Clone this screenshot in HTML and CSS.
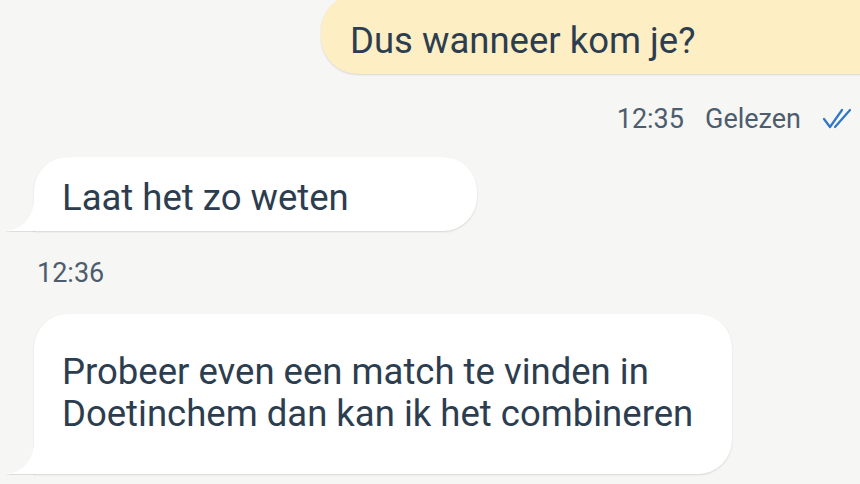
FILE: index.html
```html
<!DOCTYPE html>
<html lang="nl">
<head>
<meta charset="utf-8">
<link rel="stylesheet" href="styles.css">
</head>
<body>
<div class="chat">
  <div class="row row-out">
    <div class="bubble bubble-out">Dus wanneer kom je?</div>
  </div>
  <div class="meta meta-out">
    <span class="time">12:35</span>
    <span class="status">Gelezen</span>
    <svg class="check" width="32" height="22" viewBox="0 0 32 22" aria-hidden="true">
      <path d="M3 11 L9 19 L21 2" fill="none" stroke="#2f76c6" stroke-width="2.2" stroke-linecap="round" stroke-linejoin="round"/>
      <path d="M14 19 L29 2" fill="none" stroke="#2f76c6" stroke-width="2.2" stroke-linecap="round"/>
    </svg>
  </div>
  <div class="row row-in">
    <div class="bubble bubble-in bubble-short">Laat het zo weten</div>
  </div>
  <div class="meta meta-in">
    <span class="time">12:36</span>
  </div>
  <div class="row row-in">
    <div class="bubble bubble-in bubble-long">Probeer even een match te vinden in<br>Doetinchem dan kan ik het combineren</div>
  </div>
</div>
</body>
</html>
```

FILE: styles.css
```css
html, body {
  margin: 0;
  padding: 0;
}
body {
  background: #f6f6f4;
  width: 860px;
  height: 484px;
  overflow: hidden;
  font-family: Roboto, "Noto Sans", sans-serif;
  color: #2c3d50;
}
.chat {
  display: flex;
  flex-direction: column;
}
.row {
  display: flex;
}
.row-out {
  justify-content: flex-end;
  margin-top: -6px;
  margin-right: -60px;
}
.row-in {
  justify-content: flex-start;
  padding-left: 34px;
}
.bubble {
  font-size: 36.5px;
  line-height: 42px;
  box-shadow: 0 1px 2px rgba(0, 0, 0, 0.13);
  position: relative;
}
.bubble-out {
  background: #fdeec3;
  border-radius: 37px;
  padding: 26px 90px 12px 29px;
  width: 480px;
}
.bubble-in {
  background: #ffffff;
  border-radius: 34px 34px 34px 0;
}
.bubble-in::before {
  content: "";
  position: absolute;
  left: -28px;
  bottom: 0;
  width: 29px;
  height: 30px;
  background: radial-gradient(ellipse 28px 30px at 0 0, rgba(255,255,255,0) 97%, #ffffff 100%);
  filter: drop-shadow(0 1px 0.5px rgba(0, 0, 0, 0.10));
}
.bubble-short {
  width: 415px;
  padding: 20px 0 12px 28px;
}
.bubble-long {
  width: 670px;
  padding: 37px 0 39px 28px;
}
.meta {
  display: flex;
  align-items: center;
  font-size: 27px;
  line-height: 30px;
  color: #4d5d6e;
}
.meta-out {
  justify-content: flex-end;
  margin-top: 30px;
  padding-right: 7px;
}
.meta-out .status {
  margin-left: 21px;
}
.meta-out .check {
  margin-left: 20px;
}
.meta-in {
  margin-top: 27px;
  margin-bottom: 26px;
  padding-left: 37px;
}
.meta-out + .row-in {
  margin-top: 23px;
}
```
